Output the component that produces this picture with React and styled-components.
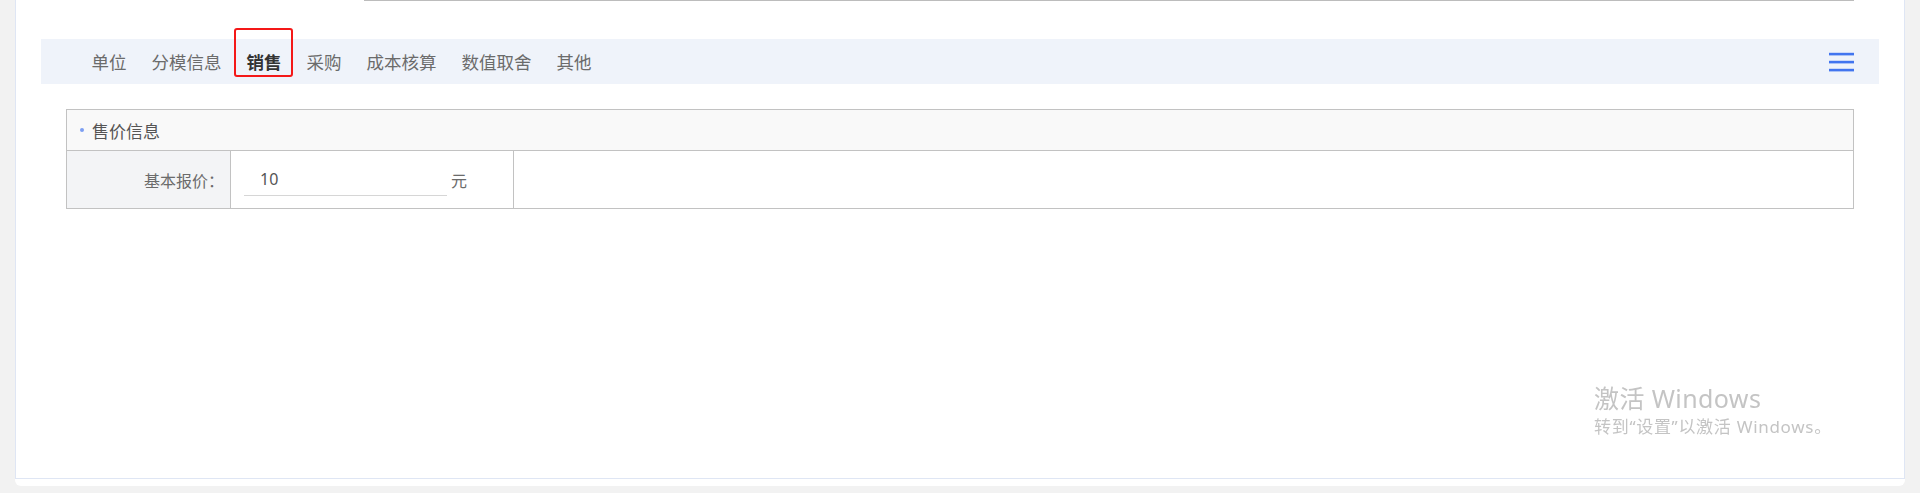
import React from 'react';
import styled, { createGlobalStyle } from 'styled-components';

const GlobalStyle = createGlobalStyle`
  html, body {
    margin: 0;
    padding: 0;
    background: #f2f2f2;
    font-family: "Noto Sans CJK SC", "Noto Sans", sans-serif;
  }
`;

const Page = styled.div`
  height: 493px;
  box-sizing: border-box;
  padding: 0 15px 7px;
  background: #f2f2f2;
  overflow: hidden;
`;

const Card = styled.div`
  height: 486px;
  box-sizing: border-box;
  padding-bottom: 7px;
  background: #fff;
  border-radius: 0 0 6px 6px;
`;

const Frame = styled.div`
  height: 100%;
  box-sizing: border-box;
  border: 1px solid #dfe6f4;
  border-top: 0;
`;

const PrevEdge = styled.div`
  height: 1px;
  margin-left: 348px;
  width: 1490px;
  background: #bcbcbc;
`;

const TabBar = styled.div`
  display: flex;
  align-items: center;
  height: 45px;
  margin: 38px 25px 0 25px;
  padding: 0 25px 0 38px;
  background: #eff3fa;
`;

const Tab = styled.div`
  position: relative;
  padding: 0 12.5px;
  font-size: 17.5px;
  line-height: 45px;
  white-space: nowrap;
  color: ${props => (props.active ? '#333' : '#6b6b6b')};
  font-weight: ${props => (props.active ? 700 : 400)};
  cursor: pointer;
`;

const Marker = styled.span`
  position: absolute;
  top: -11px;
  left: -0.5px;
  right: 1px;
  height: 49px;
  box-sizing: border-box;
  border: 2px solid #f41818;
  border-radius: 3px;
`;

const Menu = styled.svg`
  margin-left: auto;
  display: block;
`;

const Table = styled.div`
  margin: 25px 50px 0 50px;
  border: 1px solid #c2c2c2;
`;

const Header = styled.div`
  display: flex;
  align-items: center;
  height: 40px;
  padding-left: 13px;
  background: #f9f9f9;
  border-bottom: 1px solid #c2c2c2;
  font-size: 17px;
  font-weight: 400;
  color: #555;
`;

const Dot = styled.span`
  width: 4px;
  height: 4px;
  margin-right: 8px;
  border-radius: 50%;
  background: #7d9ff2;
`;

const Row = styled.div`
  display: flex;
  height: 57px;
`;

const Cell = styled.div`
  display: flex;
  align-items: center;
  box-sizing: border-box;
  width: ${props => props.width || 'auto'};
  flex: ${props => (props.grow ? 1 : 'none')};
  border-right: ${props => (props.last ? '0' : '1px solid #c2c2c2')};
  background: ${props => props.bg || '#fff'};
`;

const Label = styled.span`
  flex: 1;
  text-align: right;
  padding-right: 6px;
  font-size: 16px;
  color: #6b6b6b;
`;

const Input = styled.input`
  width: 203px;
  height: 32px;
  margin-left: 13px;
  padding: 0 0 0 16px;
  box-sizing: border-box;
  border: 0;
  border-bottom: 1px solid #d6d6d6;
  outline: 0;
  background: transparent;
  font-family: "Noto Sans", "Noto Sans CJK SC", sans-serif;
  font-size: 16px;
  color: #555;
`;

const Unit = styled.span`
  margin-left: 4px;
  font-size: 16px;
  color: #6b6b6b;
`;

const Watermark = styled.div`
  position: fixed;
  left: 1594px;
  top: 380px;
  color: #c4c4c4;
  pointer-events: none;
  font-family: "Noto Sans", "Noto Sans CJK SC", sans-serif;
`;

const WatermarkTitle = styled.div`
  font-size: 25px;
  line-height: 36px;
  letter-spacing: 0.4px;
`;

const WatermarkHint = styled.div`
  font-size: 17px;
  line-height: 22px;
  letter-spacing: 0.7px;
`;

const tabs = ['单位', '分模信息', '销售', '采购', '成本核算', '数值取舍', '其他'];

const App = () => (
  <Page>
    <GlobalStyle />
    <Card>
      <Frame>
        <PrevEdge />
        <TabBar>
          {tabs.map(t => (
            <Tab key={t} active={t === '销售'}>
              {t}
              {t === '销售' && <Marker />}
            </Tab>
          ))}
          <Menu width="25" height="20" viewBox="0 0 25 20">
            <rect x="0" y="0.8" width="25" height="2.6" fill="#4275ef" />
            <rect x="0" y="8.8" width="25" height="2.6" fill="#4275ef" />
            <rect x="0" y="16.8" width="25" height="2.6" fill="#4275ef" />
          </Menu>
        </TabBar>
        <Table>
          <Header>
            <Dot />
            售价信息
          </Header>
          <Row>
            <Cell width="164px" bg="#f3f4f6">
              <Label>基本报价：</Label>
            </Cell>
            <Cell width="283px">
              <Input defaultValue="10" />
              <Unit>元</Unit>
            </Cell>
            <Cell grow last />
          </Row>
        </Table>
      </Frame>
    </Card>
    <Watermark>
      <WatermarkTitle>激活 Windows</WatermarkTitle>
      <WatermarkHint>转到“设置”以激活 Windows。</WatermarkHint>
    </Watermark>
  </Page>
);

export default App;
